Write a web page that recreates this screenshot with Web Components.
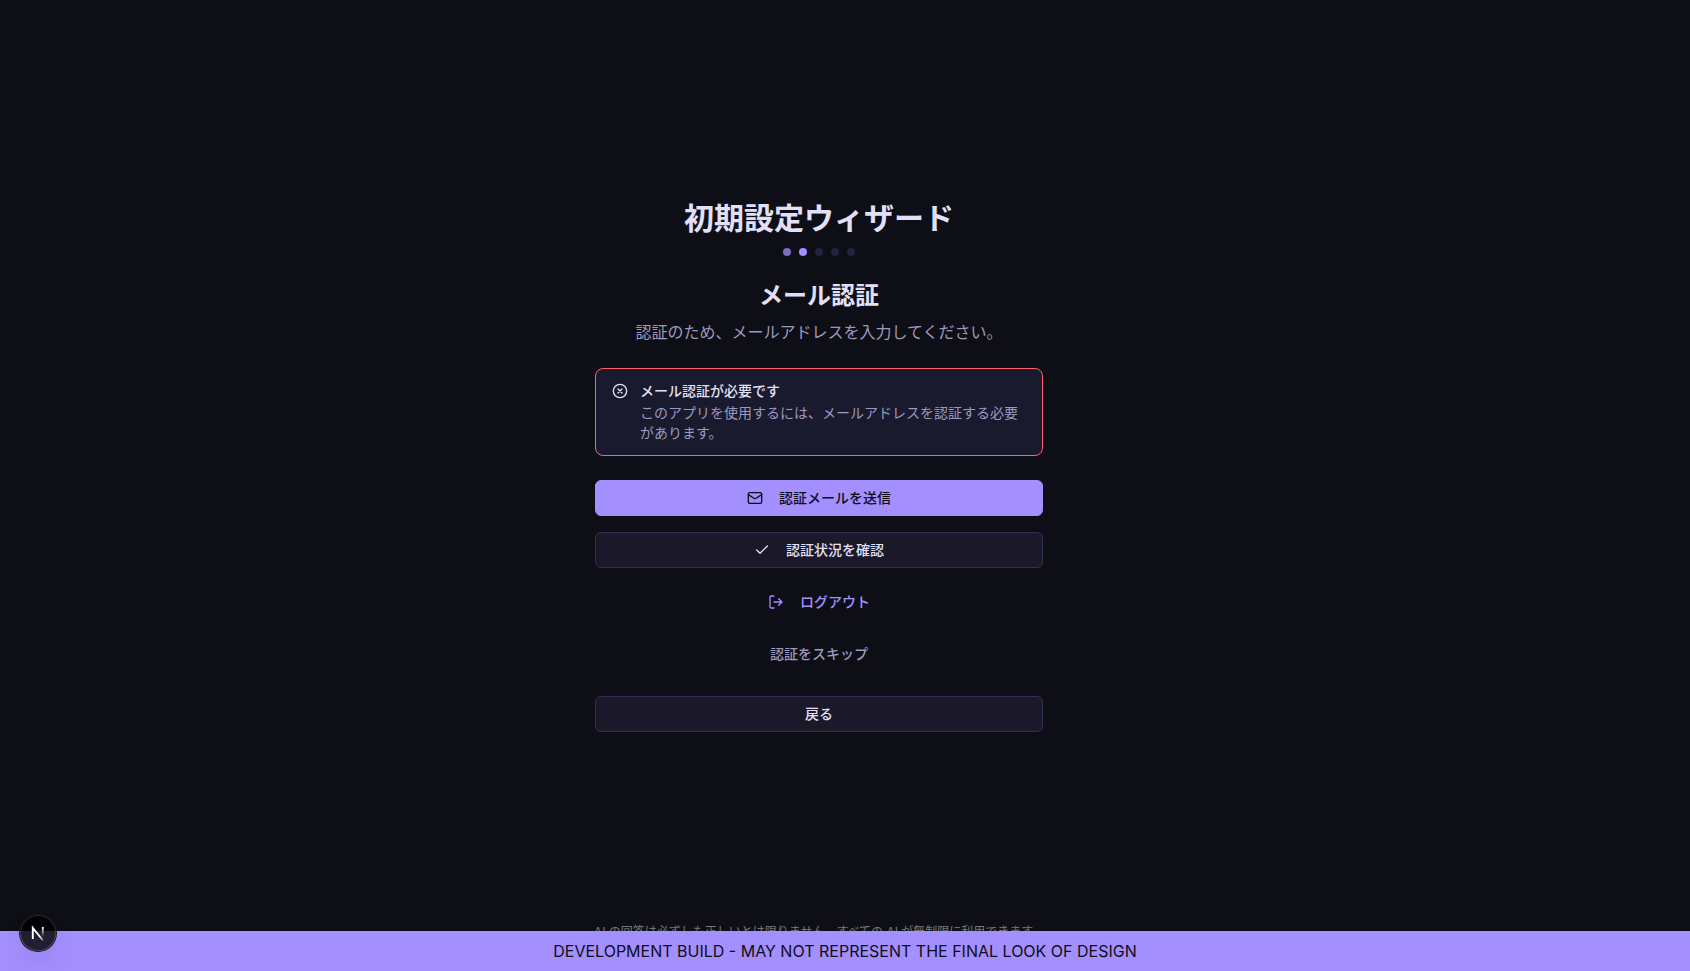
<!DOCTYPE html>
<html lang="ja">
<head>
<meta charset="utf-8">
<meta name="viewport" content="width=device-width, initial-scale=1">
<title>初期設定ウィザード</title>
<style>
:root {
  --bg: #0e0e17; --card: #1a1a2e; --field: #1a1829; --line: #312e54;
  --fg: #e2e0f9; --muted: #9d99bc; --primary: #a48fff; --danger: #ff6166; --dot: #24223f;
}
html, body { margin: 0; }
body {
  background: var(--bg); color: var(--fg);
  font: 400 16px/24px Inter, "Noto Sans CJK JP", sans-serif;
}
</style>
</head>
<body>
<app-shell>
  <setup-wizard step="2" steps="5">
    <span slot="title">初期設定ウィザード</span>
    <span slot="heading">メール認証</span>
    <span slot="lead">認証のため、メールアドレスを入力してください。</span>
    <alert-box>
      <span slot="title">メール認証が必要です</span>
      このアプリを使用するには、メールアドレスを認証する必要があります。
    </alert-box>
    <action-list>
      <action-button variant="primary" icon="mail">認証メールを送信</action-button>
      <action-button variant="outline" icon="check">認証状況を確認</action-button>
      <action-button variant="link" icon="logout">ログアウト</action-button>
      <action-button variant="ghost">認証をスキップ</action-button>
    </action-list>
    <action-button variant="outline">戻る</action-button>
  </setup-wizard>
  <span slot="note">AI の回答は必ずしも正しいとは限りません。すべての AI が無制限に利用できます。</span>
  <span slot="banner">DEVELOPMENT BUILD - MAY NOT REPRESENT THE FINAL LOOK OF DESIGN</span>
</app-shell>
<dev-badge></dev-badge>

<script>
const define = (name, html, setup) => customElements.define(name, class extends HTMLElement {
  constructor() {
    super();
    const t = document.createElement('template');
    t.innerHTML = html;
    this.attachShadow({ mode: 'open' }).append(t.content.cloneNode(true));
  }
  connectedCallback() { setup?.(this, this.shadowRoot); }
});

const icons = {
  error: '<circle cx="12" cy="12" r="10"/><path d="m15 9-6 6M9 9l6 6"/>',
  mail: '<rect x="2" y="4" width="20" height="16" rx="2"/><path d="m22 7-8.97 5.7a1.94 1.94 0 0 1-2.06 0L2 7"/>',
  check: '<path d="M20 6 9 17l-5-5"/>',
  logout: '<path d="M9 21H5a2 2 0 0 1-2-2V5a2 2 0 0 1 2-2h4M16 17l5-5-5-5M21 12H9"/>'
};

define('line-icon', `
  <style>
    :host { display: block; width: 16px; height: 16px; flex: none; }
    svg { display: block; width: 100%; height: 100%; fill: none; stroke: currentColor; stroke-width: 2; stroke-linecap: round; stroke-linejoin: round; }
  </style>
  <svg viewBox="0 0 24 24" aria-hidden="true"></svg>`,
  (el, root) => { root.querySelector('svg').innerHTML = icons[el.getAttribute('name')] || ''; });

define('app-shell', `
  <style>
    :host { display: block; position: relative; }
    main { min-height: 100vh; box-sizing: border-box; padding: 0 52px 40px 0; display: flex; align-items: center; justify-content: center; }
    .note { position: absolute; bottom: 31px; left: 0; right: 52px; margin: 0; text-align: center; font-size: 12px; line-height: 16px; color: #76767e; }
    footer { position: fixed; bottom: 0; left: 0; right: 0; padding: 8px; text-align: center; background: var(--primary); color: var(--bg); }
  </style>
  <main><slot></slot></main>
  <p class="note"><slot name="note"></slot></p>
  <footer><slot name="banner"></slot></footer>`);

define('setup-wizard', `
  <style>
    :host { display: block; width: 100%; max-width: 448px; }
    section { display: flex; flex-direction: column; gap: 24px; }
    header { text-align: center; }
    h1, h2, p { margin: 0; }
    h1 { font-size: 30px; line-height: 36px; font-weight: 700; }
    h2 { font-size: 24px; line-height: 32px; font-weight: 700; }
    p { margin-top: 8px; color: var(--muted); }
    .dots { display: flex; justify-content: center; gap: 8px; margin-top: 12px; }
    i { width: 8px; height: 8px; border-radius: 50%; background: var(--dot); }
    .done { background: #7c6dc0; }
    .now { background: var(--primary); }
  </style>
  <section>
    <header><h1><slot name="title"></slot></h1><div class="dots"></div></header>
    <header><h2><slot name="heading"></slot></h2><p><slot name="lead"></slot></p></header>
    <slot></slot>
  </section>`,
  (el, root) => {
    const step = +el.getAttribute('step');
    root.querySelector('.dots').replaceChildren(...Array.from({ length: +el.getAttribute('steps') }, (_, n) => {
      const dot = document.createElement('i');
      dot.className = n + 1 < step ? 'done' : n + 1 === step ? 'now' : '';
      return dot;
    }));
  });

define('alert-box', `
  <style>
    :host { display: flex; gap: 12px; padding: 12px 16px; border: 1px solid var(--danger); border-radius: 8px; background: var(--card); font-size: 14px; line-height: 20px; }
    line-icon { margin-top: 2px; }
    strong { display: block; font-weight: 500; margin-bottom: 2px; }
    div div { color: var(--muted); }
  </style>
  <line-icon name="error"></line-icon>
  <div role="alert"><strong><slot name="title"></slot></strong><div><slot></slot></div></div>`);

define('action-list', `
  <style>:host { display: flex; flex-direction: column; gap: 16px; }</style>
  <slot></slot>`);

define('action-button', `
  <style>
    :host { display: block; }
    button { width: 100%; height: 36px; box-sizing: border-box; display: flex; align-items: center; justify-content: center; gap: 16px; padding: 0 16px; border: 1px solid transparent; border-radius: 6px; background: none; color: var(--fg); font: inherit; font-size: 14px; line-height: 20px; font-weight: 500; cursor: pointer; }
    :host([variant=primary]) button { background: var(--primary); border-color: var(--primary); color: var(--bg); }
    :host([variant=outline]) button { background: var(--field); border-color: var(--line); }
    :host([variant=link]) button { color: var(--primary); }
    :host([variant=ghost]) button { color: var(--muted); }
  </style>
  <button type="button"><slot></slot></button>`,
  (el, root) => {
    const name = el.getAttribute('icon');
    if (!name || root.querySelector('line-icon')) return;
    const icon = document.createElement('line-icon');
    icon.setAttribute('name', name);
    root.querySelector('button').prepend(icon);
  });

define('dev-badge', `
  <style>
    :host { position: fixed; left: 20px; bottom: 20px; }
    button { display: block; width: 36px; height: 36px; padding: 0; border: 0; border-radius: 50%; background: rgba(0,0,0,.8); box-shadow: 0 0 0 1px #171717, inset 0 0 0 1px rgba(255,255,255,.14), 0 16px 32px -8px rgba(0,0,0,.24); }
    svg { display: block; width: 36px; height: 36px; }
  </style>
  <button type="button" aria-label="Next.js">
    <svg viewBox="0 0 36 36" fill="none" aria-hidden="true">
      <defs>
        <linearGradient id="a" x1="20" y1="21" x2="25" y2="27" gradientUnits="userSpaceOnUse"><stop stop-color="#fff"/><stop offset="1" stop-color="#fff" stop-opacity="0"/></linearGradient>
        <linearGradient id="b" x1="23" y1="12" x2="23" y2="22" gradientUnits="userSpaceOnUse"><stop stop-color="#fff"/><stop offset="1" stop-color="#fff" stop-opacity="0"/></linearGradient>
      </defs>
      <path d="M12.800 24V13L23 25.500" stroke="url(#a)" stroke-width="1.900"/>
      <path d="M22.800 12V22" stroke="url(#b)" stroke-width="1.900"/>
    </svg>
  </button>`);
</script>
</body>
</html>
